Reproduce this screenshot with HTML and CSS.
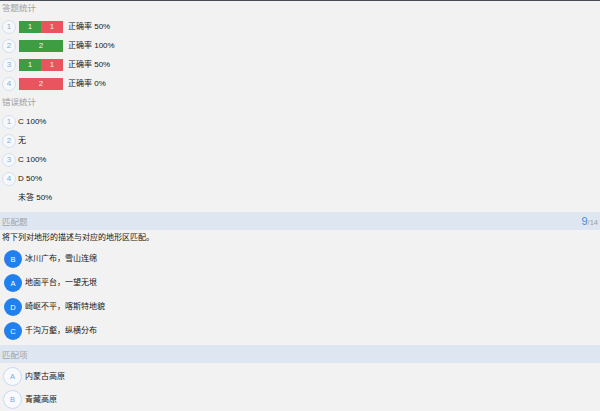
FILE: index.html
```html
<!DOCTYPE html>
<html lang="zh">
<head>
<meta charset="utf-8">
<link rel="stylesheet" href="styles.css">
</head>
<body>
<div class="topbar"></div>

<div class="label">答题统计</div>
<div class="list stats">
  <div class="row"><span class="num">1</span><div class="bar"><span class="ok" style="flex:1">1</span><span class="bad" style="flex:1">1</span></div><span class="txt">正确率 50%</span></div>
  <div class="row"><span class="num">2</span><div class="bar"><span class="ok" style="flex:2">2</span></div><span class="txt">正确率 100%</span></div>
  <div class="row"><span class="num">3</span><div class="bar"><span class="ok" style="flex:1">1</span><span class="bad" style="flex:1">1</span></div><span class="txt">正确率 50%</span></div>
  <div class="row"><span class="num">4</span><div class="bar"><span class="bad" style="flex:2">2</span></div><span class="txt">正确率 0%</span></div>
</div>

<div class="label second">错误统计</div>
<div class="list errors">
  <div class="row"><span class="num">1</span><span class="txt">C 100%</span></div>
  <div class="row"><span class="num">2</span><span class="txt">无</span></div>
  <div class="row"><span class="num">3</span><span class="txt">C 100%</span></div>
  <div class="row"><span class="num">4</span><span class="txt">D 50%</span></div>
  <div class="row"><span class="num blank"></span><span class="txt">未答 50%</span></div>
</div>

<div class="band first"><span>匹配题</span><span class="count"><b>9</b>/14</span></div>
<div class="question">将下列对地形的描述与对应的地形区匹配。</div>
<div class="list options">
  <div class="row"><span class="dot">B</span><span class="txt">冰川广布，雪山连绵</span></div>
  <div class="row"><span class="dot">A</span><span class="txt">地面平台，一望无垠</span></div>
  <div class="row"><span class="dot">D</span><span class="txt">崎岖不平，喀斯特地貌</span></div>
  <div class="row"><span class="dot">C</span><span class="txt">千沟万壑，纵横分布</span></div>
</div>

<div class="band"><span>匹配项</span></div>
<div class="list items">
  <div class="row"><span class="ring">A</span><span class="txt">内蒙古高原</span></div>
  <div class="row"><span class="ring">B</span><span class="txt">青藏高原</span></div>
</div>
</body>
</html>
```

FILE: styles.css
```css
* { box-sizing: border-box; }
html, body {
  margin: 0;
  padding: 0;
  background: #f2f2f2;
  font-family: "Liberation Sans", "Noto Sans CJK SC", sans-serif;
  font-size: 8px;
  color: #161616;
  overflow: hidden;
}
.topbar {
  height: 1px;
  background: #474c56;
}
.label {
  height: 14px;
  line-height: 14px;
  padding-left: 2px;
  color: #a0a0a0;
  font-size: 8.5px;
}
.label.second { margin-top: 2px; }
.list {
  display: flex;
  flex-direction: column;
}
.stats { padding-top: 2px; }
.errors { padding-top: 3px; }
.row {
  display: flex;
  align-items: center;
  height: 19px;
}
.txt { font-size: 8px; line-height: 12px; }
.num {
  width: 14px;
  height: 14px;
  margin-left: 2px;
  border: 1px solid #d3e0f1;
  border-radius: 50%;
  color: #85abe0;
  font-size: 8px;
  display: flex;
  align-items: center;
  justify-content: center;
  background: #f6f8fb;
}
.num.blank { border-color: transparent; background: transparent; }
.bar {
  display: flex;
  width: 44px;
  height: 12px;
  margin-left: 3px;
}
.bar span {
  display: flex;
  align-items: center;
  justify-content: center;
  color: #f3f3f3;
  font-size: 8px;
}
.ok { background: #3e9c42; }
.bad { background: #e9545e; }
.stats .txt { margin-left: 5px; }
.errors .txt { margin-left: 2px; }
.band {
  margin-top: 2px;
  height: 18px;
  background: #dee7f1;
  display: flex;
  align-items: center;
  justify-content: space-between;
  padding: 0 2px;
  color: #a3a3a3;
  font-size: 8.5px;
}
.band.first { margin-top: 5px; }
.count { color: #a0a0a0; font-size: 7.5px; }
.count b { color: #4a88d8; font-weight: normal; font-size: 11px; }
.question {
  height: 16px;
  line-height: 16px;
  padding-left: 2px;
}
.options .row { height: 24px; }
.options { padding-top: 1px; }
.dot {
  width: 18px;
  height: 18px;
  margin-left: 4px;
  border-radius: 50%;
  background: #1f80ee;
  color: #fff;
  display: flex;
  align-items: center;
  justify-content: center;
  font-size: 7.5px;
}
.options .txt, .items .txt { margin-left: 3px; }
.items { padding-top: 2px; }
.items .row { height: 23px; }
.ring {
  width: 19px;
  height: 19px;
  margin-left: 3px;
  border: 1px solid #c8d9ef;
  border-radius: 50%;
  background: #f7f9fc;
  color: #7ea6de;
  display: flex;
  align-items: center;
  justify-content: center;
  font-size: 7.5px;
}
```
